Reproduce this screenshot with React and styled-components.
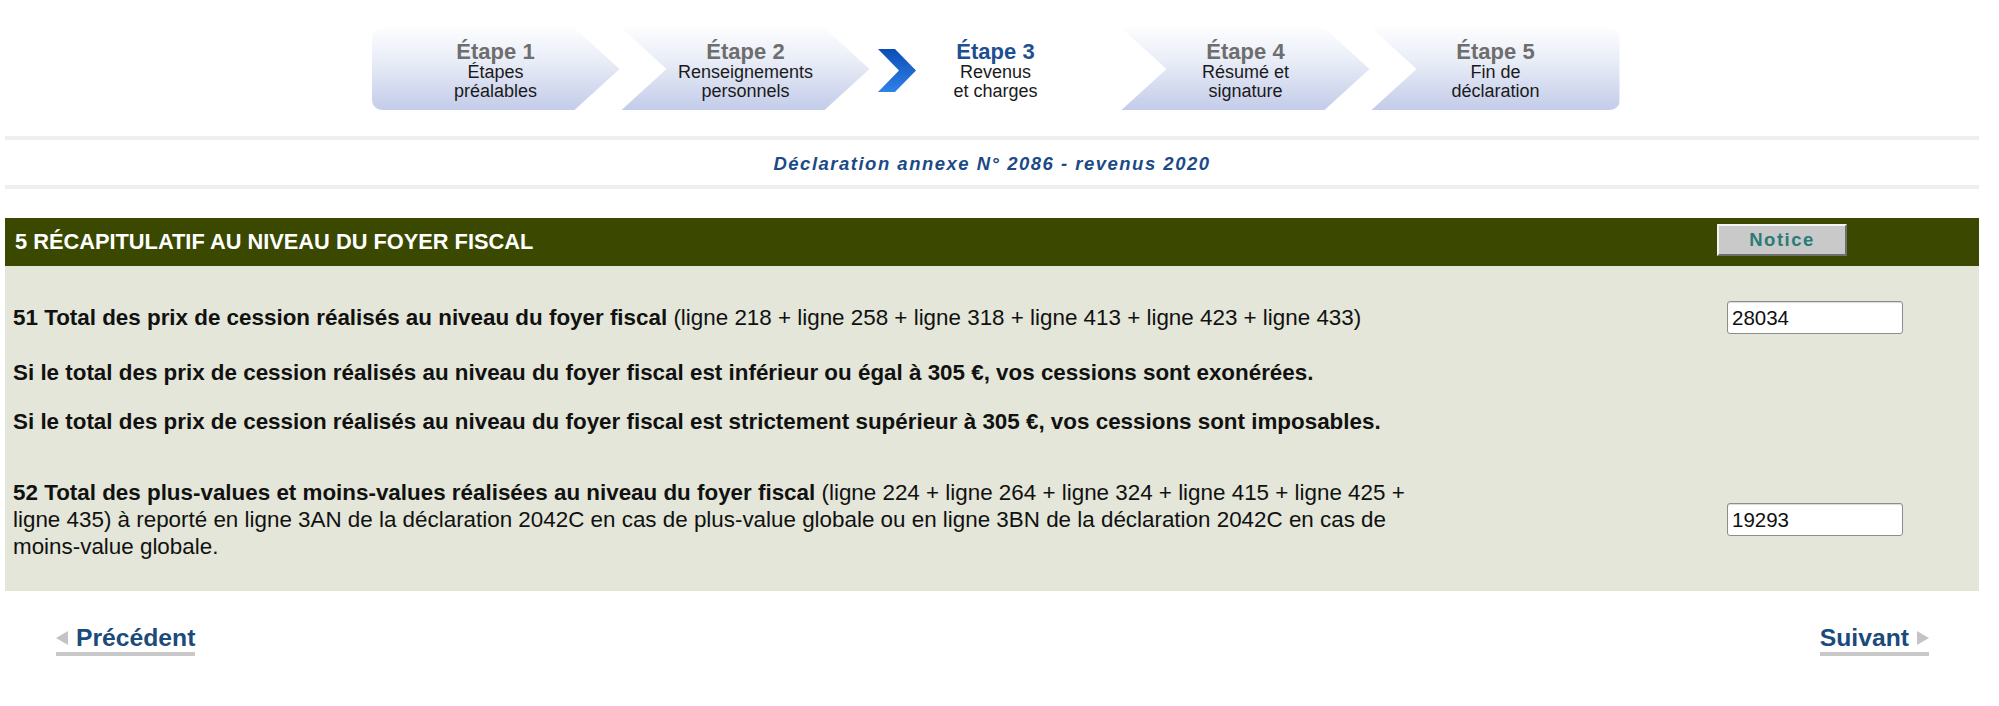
import React from "react"
import styled, { createGlobalStyle } from "styled-components"

const GlobalStyle = createGlobalStyle`
    body {
        margin: 0;
        background: #ffffff;
        font-family: "Liberation Sans", Arial, sans-serif;
        color: #111111;
    }
`

const Page = styled.div`
    width: 1999px;
    padding-top: 28px;
    padding-bottom: 40px;
`

const StepsBar = styled.nav`
    display: flex;
    justify-content: center;
    gap: 2px;
    padding-right: 8px;
`

const clips = {
    first: "polygon(0 0, calc(100% - 45px) 0, 100% 50%, calc(100% - 45px) 100%, 0 100%)",
    middle: "polygon(0 0, calc(100% - 45px) 0, 100% 50%, calc(100% - 45px) 100%, 0 100%, 45px 50%)",
    last: "polygon(0 0, 100% 0, 100% 100%, 0 100%, 45px 50%)",
}

const Step = styled.div`
    position: relative;
    width: 248px;
    height: 82px;
    box-sizing: border-box;
    padding-top: 3px;
    display: flex;
    flex-direction: column;
    align-items: center;
    justify-content: center;
    text-align: center;
    background: ${p =>
        p.$active
            ? "transparent"
            : "linear-gradient(180deg, #fcfdfe 0%, #e9edf7 40%, #c3cce9 100%)"};
    clip-path: ${p => (p.$active ? "none" : clips[p.$kind])};
    border-radius: ${p =>
        p.$kind === "first" ? "10px 0 0 10px" : p.$kind === "last" ? "0 10px 10px 0" : "0"};
`

const StepTitle = styled.span`
    font-size: 22px;
    font-weight: bold;
    line-height: 22px;
    color: ${p => (p.$active ? "#1d4f91" : "#6e6e6e")};
`

const StepText = styled.span`
    font-size: 18px;
    line-height: 19px;
    color: #1a1a1a;
`

const Chevron = styled.svg`
    position: absolute;
    left: 6px;
    top: 21px;
`

const Content = styled.div`
    margin: 0 20px 0 5px;
`

const Rule = styled.div`
    height: 4px;
    background: #eeeeee;
    margin-top: ${p => p.$top}px;
`

const Subtitle = styled.h2`
    margin: 13px 0 0;
    text-align: center;
    font-size: 18.5px;
    line-height: 22px;
    font-weight: bold;
    font-style: italic;
    letter-spacing: 1.5px;
    color: #1b4a86;
`

const SectionHeader = styled.div`
    margin-top: 29px;
    height: 48px;
    background: #3b4900;
    display: flex;
    align-items: center;
    justify-content: space-between;
    padding-left: 10px;
`

const SectionTitle = styled.h3`
    margin: 0;
    font-size: 21.8px;
    font-weight: bold;
    color: #ffffff;
`

const NoticeButton = styled.button`
    width: 130px;
    height: 32px;
    margin-right: 132px;
    margin-top: -4px;
    background: #c9c9c9;
    border: 2px solid;
    border-color: #f4f4f4 #6e6e6e #6e6e6e #f4f4f4;
    font-family: "Liberation Sans", Arial, sans-serif;
    font-size: 18.5px;
    font-weight: bold;
    letter-spacing: 1.5px;
    color: #2b7b78;
    padding: 0;
`

const Panel = styled.div`
    background: #e3e6d8;
    padding: 35px 76px 31px 8px;
`

const FieldRow = styled.div`
    display: grid;
    grid-template-columns: 1fr 176px;
    align-items: center;
    margin-top: ${p => p.$gap || 0}px;
`

const Label = styled.p`
    margin: 0;
    font-size: 22.4px;
    line-height: 27px;
    white-space: nowrap;
`

const Note = styled.p`
    margin: ${p => p.$gap}px 0 0;
    font-size: 22.4px;
    line-height: 27px;
    font-weight: bold;
`

const Amount = styled.input`
    width: 176px;
    height: 33px;
    box-sizing: border-box;
    border: 1px solid #8d8d8d;
    border-radius: 3px;
    background: #ffffff;
    box-shadow: inset 0 1px 1px rgba(0, 0, 0, 0.15);
    font-family: "Liberation Sans", Arial, sans-serif;
    font-size: 20.5px;
    color: #111111;
    padding: 0 4px;
`

const Footer = styled.div`
    margin-top: 33px;
    padding: 0 50px 0 51px;
    display: flex;
    justify-content: space-between;
`

const NavLink = styled.a`
    display: inline-flex;
    align-items: center;
    gap: 8px;
    font-size: 24.7px;
    line-height: 28px;
    font-weight: bold;
    color: #1b4a7c;
    text-decoration: none;
    border-bottom: 4px solid #c8c8c8;
`

const Arrow = styled.span`
    width: 0;
    height: 0;
    border-top: 7px solid transparent;
    border-bottom: 7px solid transparent;
    ${p =>
        p.$dir === "left"
            ? "border-right: 12px solid #c4c4c4;"
            : "border-left: 12px solid #c4c4c4;"}
`

const steps = [
    { title: "Étape 1", lines: ["Étapes", "préalables"] },
    { title: "Étape 2", lines: ["Renseignements", "personnels"] },
    { title: "Étape 3", lines: ["Revenus", "et charges"], active: true },
    { title: "Étape 4", lines: ["Résumé et", "signature"] },
    { title: "Étape 5", lines: ["Fin de", "déclaration"] },
]

export default function App() {
    return (
        <Page>
            <GlobalStyle />
            <StepsBar>
                {steps.map((s, i) => (
                    <Step
                        key={s.title}
                        $active={s.active}
                        $kind={i === 0 ? "first" : i === steps.length - 1 ? "last" : "middle"}
                    >
                        {s.active && (
                            <Chevron width="38" height="43" viewBox="0 0 38 43">
                                <defs>
                                    <linearGradient id="chev" x1="0" y1="0" x2="0" y2="1">
                                        <stop offset="0" stopColor="#0b4db5" />
                                        <stop offset="1" stopColor="#2f82e8" />
                                    </linearGradient>
                                </defs>
                                <polygon points="0,0 17,0 38,21.5 17,43 0,43 21,21.5" fill="url(#chev)" />
                            </Chevron>
                        )}
                        <StepTitle $active={s.active}>{s.title}</StepTitle>
                        {s.lines.map(l => (
                            <StepText key={l}>{l}</StepText>
                        ))}
                    </Step>
                ))}
            </StepsBar>

            <Content>
                <Rule $top={26} />
                <Subtitle>Déclaration annexe N° 2086 - revenus 2020</Subtitle>
                <Rule $top={10} />

                <SectionHeader>
                    <SectionTitle>5 RÉCAPITULATIF AU NIVEAU DU FOYER FISCAL</SectionTitle>
                    <NoticeButton>Notice</NoticeButton>
                </SectionHeader>

                <Panel>
                    <FieldRow>
                        <Label>
                            <b>51 Total des prix de cession réalisés au niveau du foyer fiscal</b> (ligne 218 +
                            ligne 258 + ligne 318 + ligne 413 + ligne 423 + ligne 433)
                        </Label>
                        <Amount defaultValue="28034" />
                    </FieldRow>
                    <Note $gap={25}>
                        Si le total des prix de cession réalisés au niveau du foyer fiscal est inférieur ou égal
                        à 305 €, vos cessions sont exonérées.
                    </Note>
                    <Note $gap={22}>
                        Si le total des prix de cession réalisés au niveau du foyer fiscal est strictement
                        supérieur à 305 €, vos cessions sont imposables.
                    </Note>
                    <FieldRow $gap={44}>
                        <Label>
                            <b>52 Total des plus-values et moins-values réalisées au niveau du foyer fiscal</b>{" "}
                            (ligne 224 + ligne 264 + ligne 324 + ligne 415 + ligne 425 +
                            <br />
                            ligne 435) à reporté en ligne 3AN de la déclaration 2042C en cas de plus-value
                            globale ou en ligne 3BN de la déclaration 2042C en cas de
                            <br />
                            moins-value globale.
                        </Label>
                        <Amount defaultValue="19293" />
                    </FieldRow>
                </Panel>

                <Footer>
                    <NavLink href="#">
                        <Arrow $dir="left" />
                        Précédent
                    </NavLink>
                    <NavLink href="#">
                        Suivant
                        <Arrow $dir="right" />
                    </NavLink>
                </Footer>
            </Content>
        </Page>
    )
}
